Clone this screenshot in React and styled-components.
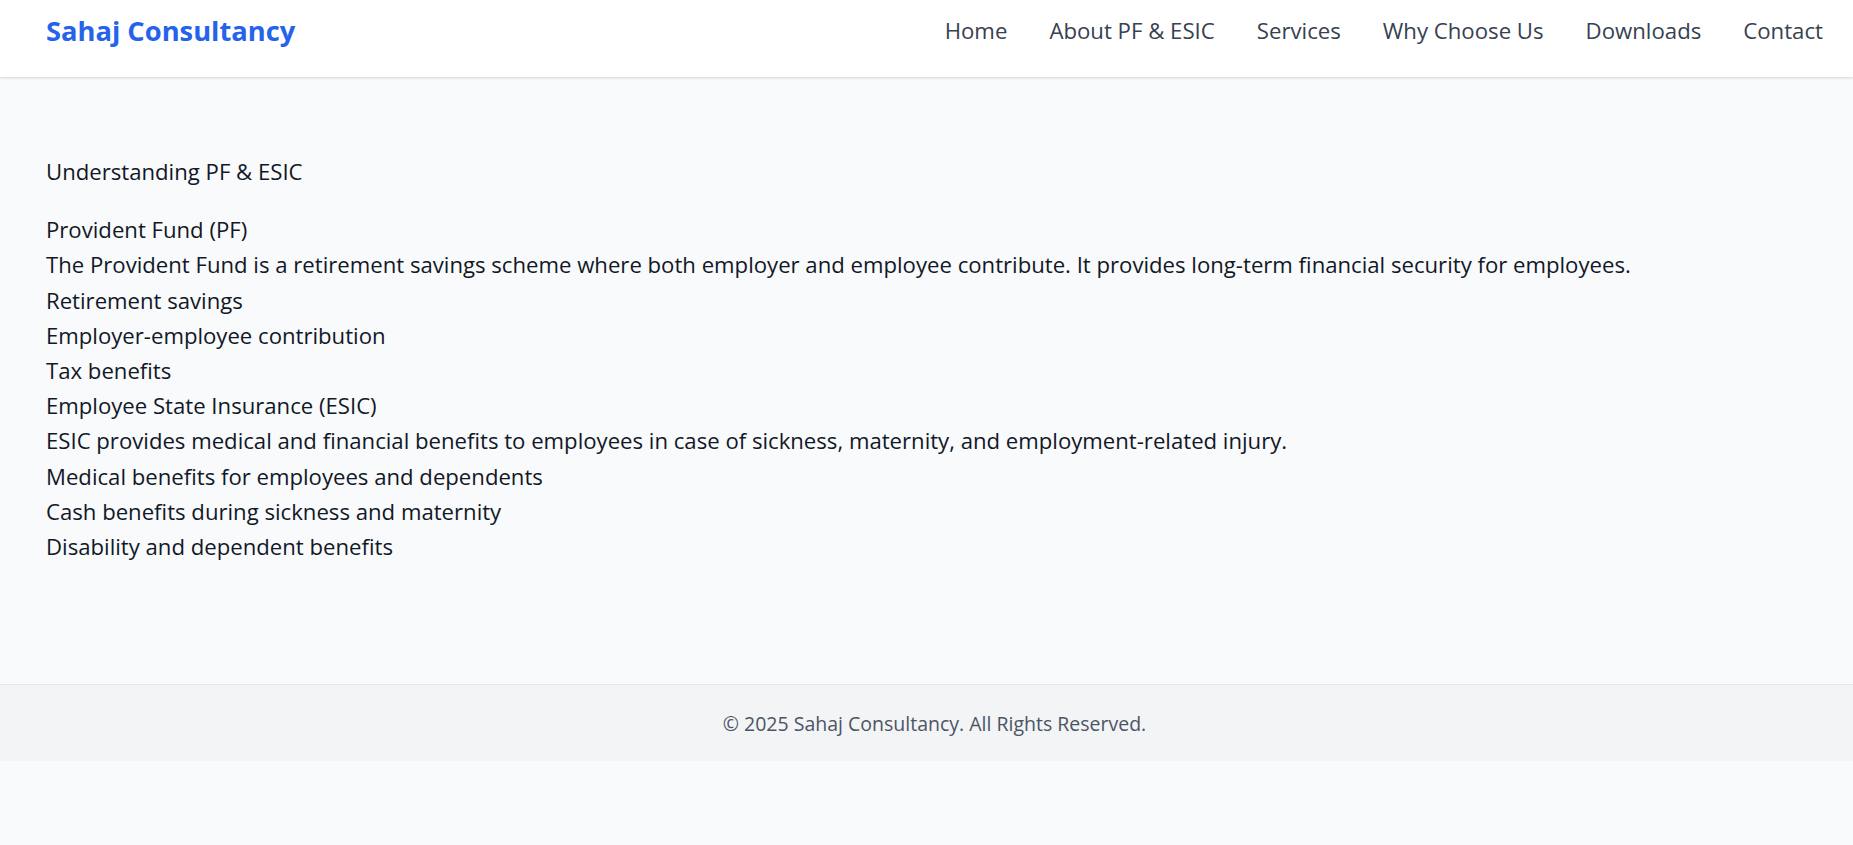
import React from "react";
import styled, { createGlobalStyle } from "styled-components";

const GlobalStyle = createGlobalStyle`
  *, *::before, *::after { box-sizing: border-box; }
  html, body {
    margin: 0;
    padding: 0;
    background: #f9fafb;
    font-family: "Open Sans", "Noto Sans", sans-serif;
    color: #111827;
  }
`;

const Page = styled.div`
  display: flex;
  flex-direction: column;
  min-height: 100vh;
  background: #f9fafb;
`;

const Header = styled.header`
  display: flex;
  align-items: center;
  justify-content: space-between;
  height: 77px;
  padding: 0 30px 16px 46px;
  background: #ffffff;
  box-shadow: 0 1px 3px rgba(0, 0, 0, 0.1), 0 1px 2px rgba(0, 0, 0, 0.06);
  position: relative;
  z-index: 1;
`;

const Brand = styled.div`
  font-size: 27.3px;
  font-weight: 700;
  line-height: 1.3;
  color: #2563eb;
`;

const Nav = styled.nav`
  display: flex;
  align-items: center;
  gap: 42px;
`;

const NavLink = styled.a`
  font-size: 22.2px;
  line-height: 1.5;
  color: #374151;
  text-decoration: none;
  cursor: pointer;
`;

const Main = styled.main`
  padding: 77px 46px 120px;
`;

const Section = styled.section`
  display: flex;
  flex-direction: column;
`;

const Title = styled.h2`
  margin: 0 0 23px;
  font-size: 22.15px;
  font-weight: 400;
  line-height: 35.2px;
`;

const Line = styled.p`
  margin: 0;
  font-size: 22.15px;
  line-height: 35.2px;
`;

const List = styled.ul`
  margin: 0;
  padding: 0;
  list-style: none;
`;

const Item = styled.li`
  font-size: 22.15px;
  line-height: 35.2px;
`;

const Footer = styled.footer`
  display: flex;
  align-items: center;
  justify-content: center;
  height: 77px;
  padding-left: 16px;
  background: #f3f4f6;
  border-top: 1px solid #e5e7eb;
`;

const Copy = styled.p`
  margin: 0;
  font-size: 19.5px;
  color: #4b5563;
`;

const navItems = ["Home", "About PF & ESIC", "Services", "Why Choose Us", "Downloads", "Contact"];

const blocks = [
  {
    title: "Provident Fund (PF)",
    text: "The Provident Fund is a retirement savings scheme where both employer and employee contribute. It provides long-term financial security for employees.",
    points: ["Retirement savings", "Employer-employee contribution", "Tax benefits"],
  },
  {
    title: "Employee State Insurance (ESIC)",
    text: "ESIC provides medical and financial benefits to employees in case of sickness, maternity, and employment-related injury.",
    points: [
      "Medical benefits for employees and dependents",
      "Cash benefits during sickness and maternity",
      "Disability and dependent benefits",
    ],
  },
];

export default function App() {
  return (
    <>
      <GlobalStyle />
      <Page>
        <Header>
          <Brand>Sahaj Consultancy</Brand>
          <Nav>
            {navItems.map((n) => (
              <NavLink key={n}>{n}</NavLink>
            ))}
          </Nav>
        </Header>
        <Main>
          <Section>
            <Title>Understanding PF &amp; ESIC</Title>
            {blocks.map((b) => (
              <div key={b.title}>
                <Line>{b.title}</Line>
                <Line>{b.text}</Line>
                <List>
                  {b.points.map((p) => (
                    <Item key={p}>{p}</Item>
                  ))}
                </List>
              </div>
            ))}
          </Section>
        </Main>
        <Footer>
          <Copy>© 2025 Sahaj Consultancy. All Rights Reserved.</Copy>
        </Footer>
      </Page>
    </>
  );
}
